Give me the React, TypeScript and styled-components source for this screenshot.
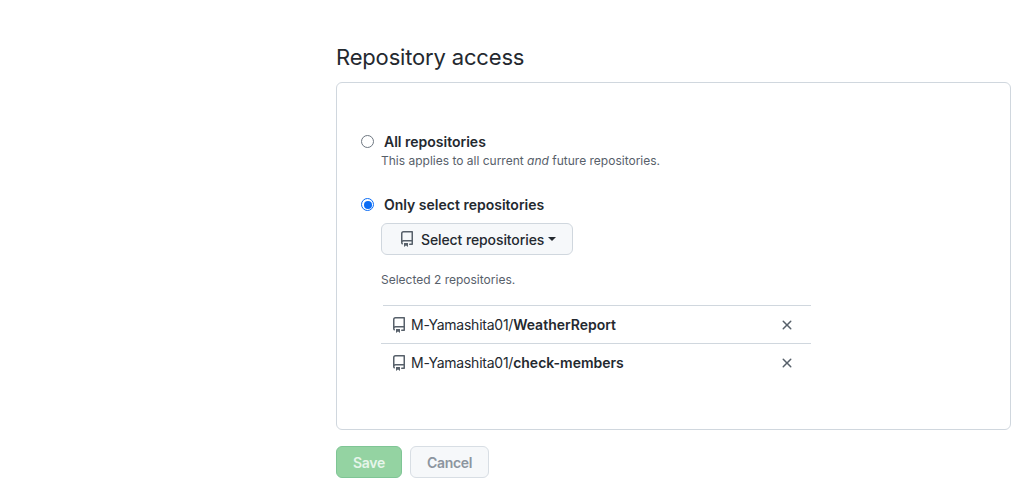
import { FC } from "react";
import styled, { createGlobalStyle } from "styled-components";

const GlobalStyle = createGlobalStyle`
  html, body {
    margin: 0;
    background: #ffffff;
    color: #24292f;
    font-family: Inter, "Liberation Sans", sans-serif;
  }
`;

const Page = styled.div`
  width: 1027px;
  height: 493px;
  overflow: hidden;
  padding: 43px 16px 0 336px;
  box-sizing: border-box;
`;

const Heading = styled.h2`
  margin: 0 0 10px;
  font-size: 22px;
  line-height: 29px;
  font-weight: 400;
  letter-spacing: -0.17px;
  color: #24292f;
`;

const Panel = styled.div`
  box-sizing: border-box;
  width: 675px;
  height: 348px;
  border: 1px solid #d0d7de;
  border-radius: 6px;
  padding: 49px 24px 0;
`;

const OptionRow = styled.label`
  display: flex;
  align-items: center;
  gap: 10px;
  height: 18px;
  font-size: 14px;
  font-weight: 600;
  color: #24292f;
`;

const Radio = styled.span<{ $checked?: boolean }>`
  box-sizing: border-box;
  width: 13px;
  height: 13px;
  border-radius: 50%;
  padding: ${(p) => (p.$checked ? "1.5px" : "0")};
  background: ${(p) => (p.$checked ? "#0a6cf5" : "#ffffff")};
  background-clip: content-box;
  border: ${(p) => (p.$checked ? "1.5px solid #0a6cf5" : "1px solid #6e7781")};
`;

const Note = styled.p`
  margin: 2px 0 0 20px;
  font-size: 12px;
  line-height: 18px;
  color: #57606a;
`;

const SecondOption = styled.div`
  margin-top: 25px;
`;

const SelectButton = styled.button`
  display: flex;
  align-items: center;
  box-sizing: border-box;
  margin: 10px 0 0 20px;
  width: 192px;
  height: 32px;
  padding: 0 0 0 17px;
  border: 1px solid #d0d7de;
  border-radius: 6px;
  background: #f6f8fa;
  color: #24292f;
  font-family: inherit;
  font-size: 14px;
  font-weight: 500;
  letter-spacing: -0.1px;
`;

const RepoIcon = styled.svg`
  width: 16px;
  height: 16px;
  flex: none;
  fill: #57606a;
`;

const ButtonIcon = styled(RepoIcon)`
  margin-right: 6px;
`;

const Caret = styled.span`
  margin-left: 4px;
  border-top: 4px solid #24292f;
  border-left: 4px solid transparent;
  border-right: 4px solid transparent;
`;

const SelectedCount = styled(Note)`
  margin-top: 16px;
`;

const RepoList = styled.ul`
  list-style: none;
  margin: 16px 0 0 20px;
  padding: 0;
  width: 430px;
`;

const RepoRow = styled.li<{ $inset: number }>`
  display: flex;
  align-items: center;
  gap: 4px;
  box-sizing: border-box;
  height: 38px;
  padding: 1px 16px 0 10px;
  font-size: 14px;
  color: #24292f;
  background: linear-gradient(#d0d7de, #d0d7de) no-repeat
    ${(p) => p.$inset}px 0 / calc(100% - ${(p) => p.$inset}px) 1px;
`;

const RepoName = styled.span`
  flex: 1;
  letter-spacing: -0.25px;

  b {
    font-weight: 600;
    letter-spacing: 0;
  }
`;

const RemoveIcon = styled.svg`
  width: 16px;
  height: 16px;
  fill: #57606a;
`;

const Actions = styled.div`
  display: flex;
  gap: 8px;
  margin-top: 16px;
`;

const ActionButton = styled.button<{ $primary?: boolean }>`
  box-sizing: border-box;
  height: 32px;
  padding: 0 16px;
  border-radius: 6px;
  font-family: inherit;
  font-size: 14px;
  font-weight: 600;
  letter-spacing: -0.3px;
  border: 1px solid ${(p) => (p.$primary ? "#7fc595" : "#d8dee4")};
  background: ${(p) => (p.$primary ? "#94d3a2" : "#f6f8fa")};
  color: ${(p) => (p.$primary ? "#e6f5ea" : "#8c959f")};
`;

const repoPath =
  "M2 2.5A2.5 2.5 0 0 1 4.5 0h8.75a.75.75 0 0 1 .75.75v12.5a.75.75 0 0 1-.75.75h-2.5a.75.75 0 0 1 0-1.5h1.75v-2h-8a1 1 0 0 0-.714 1.7.75.75 0 1 1-1.072 1.05A2.495 2.495 0 0 1 2 11.5Zm10.5-1h-8a1 1 0 0 0-1 1v6.708A2.486 2.486 0 0 1 4.5 9h8ZM5 12.25a.25.25 0 0 1 .25-.25h3.5a.25.25 0 0 1 .25.25v3.25a.25.25 0 0 1-.4.2l-1.45-1.087a.249.249 0 0 0-.3 0L5.4 15.7a.25.25 0 0 1-.4-.2Z";

const xPath =
  "M3.72 3.72a.75.75 0 0 1 1.06 0L8 6.94l3.22-3.22a.749.749 0 1 1 1.06 1.06L9.06 8l3.22 3.22a.749.749 0 1 1-1.06 1.06L8 9.06l-3.22 3.22a.749.749 0 1 1-1.06-1.06L6.94 8 3.72 4.78a.75.75 0 0 1 0-1.06Z";

const repos = [
  { owner: "M-Yamashita01", name: "WeatherReport", inset: 2 },
  { owner: "M-Yamashita01", name: "check-members", inset: 0 },
];

const App: FC = () => {
  return (
    <Page>
      <GlobalStyle />
      <Heading>Repository access</Heading>
      <Panel>
        <OptionRow>
          <Radio />
          All repositories
        </OptionRow>
        <Note>
          This applies to all current <em>and</em> future repositories.
        </Note>
        <SecondOption>
          <OptionRow>
            <Radio $checked />
            Only select repositories
          </OptionRow>
          <SelectButton>
            <ButtonIcon viewBox="0 0 16 16">
              <path d={repoPath} />
            </ButtonIcon>
            Select repositories
            <Caret />
          </SelectButton>
          <SelectedCount>Selected 2 repositories.</SelectedCount>
          <RepoList>
            {repos.map((repo) => (
              <RepoRow key={repo.name} $inset={repo.inset}>
                <RepoIcon viewBox="0 0 16 16">
                  <path d={repoPath} />
                </RepoIcon>
                <RepoName>
                  {repo.owner}/<b>{repo.name}</b>
                </RepoName>
                <RemoveIcon viewBox="0 0 16 16">
                  <path d={xPath} />
                </RemoveIcon>
              </RepoRow>
            ))}
          </RepoList>
        </SecondOption>
      </Panel>
      <Actions>
        <ActionButton $primary>Save</ActionButton>
        <ActionButton>Cancel</ActionButton>
      </Actions>
    </Page>
  );
};

export default App;
